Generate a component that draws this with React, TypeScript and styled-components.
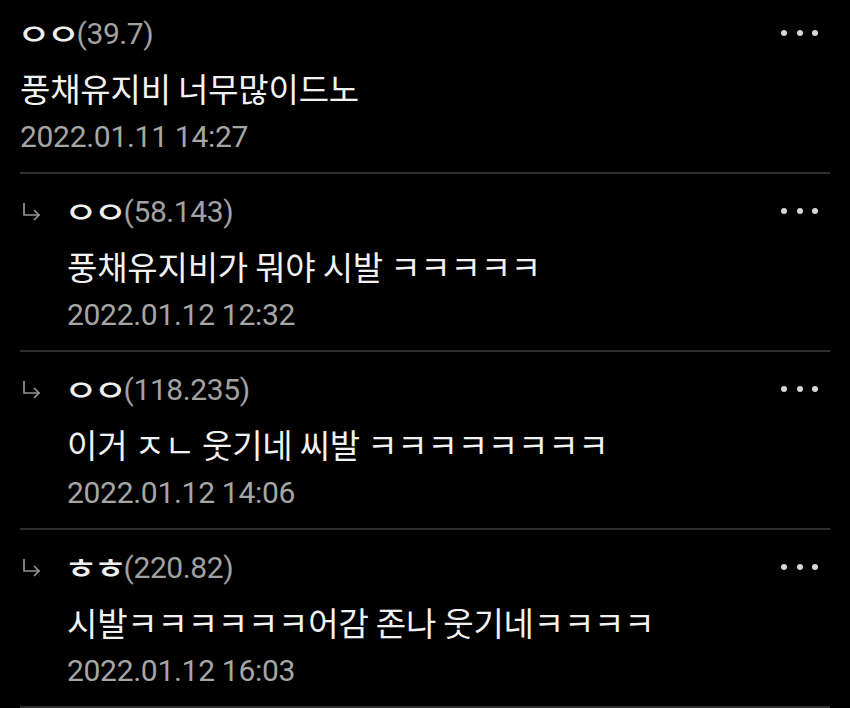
import styled, { createGlobalStyle } from 'styled-components';

const GlobalStyle = createGlobalStyle`
  html, body {
    margin: 0;
    padding: 0;
    background: #000;
  }
  body {
    width: 850px;
    height: 708px;
    overflow: hidden;
    font-family: Roboto, "Noto Sans CJK KR", sans-serif;
  }
`;

const StyledList = styled.div`
  margin: 0 20px;
`;

const Row = styled.div<{ $first?: boolean }>`
  display: flex;
  padding: ${(p) => (p.$first ? '13px' : '17px')} 0 11px;
  border-bottom: 2px solid #2f2f2f;
`;

const Arrow = styled.div`
  width: 47px;
  flex: none;
  height: 40px;
  display: flex;
  align-items: center;
  padding: 2px 0 0 1px;
  box-sizing: border-box;
  color: #959595;
`;

const Body = styled.div`
  flex: 1;
  min-width: 0;
`;

const Head = styled.div`
  display: flex;
  align-items: center;
  height: 40px;
`;

// the app's jamo are flatter ovals than Noto's circles
const Nick = styled.span`
  display: inline-block;
  color: #f0f0f0;
  font-family: "Noto Sans CJK KR", sans-serif;
  font-size: 34px;
  font-weight: 500;
  line-height: 40px;
  letter-spacing: -4px;
  margin: 0 5px 0 -3px;
  transform: scale(1.08, 0.84);
  transform-origin: left center;
`;

const Score = styled.span`
  color: #a2a2a2;
  font-size: 30px;
  letter-spacing: -0.4px;
`;

const More = styled.div`
  margin-left: auto;
  margin-right: 12px;
  display: flex;
  gap: 9.5px;

  i {
    width: 6px;
    height: 6px;
    border-radius: 50%;
    background: #d6d6d6;
  }
`;

const Text = styled.div`
  margin-top: 10px;
  height: 50px;
  line-height: 50px;
  color: #f2f2f2;
  font-family: "Noto Sans CJK KR", sans-serif;
  font-size: 33px;
  letter-spacing: -0.2px;
  white-space: nowrap;
`;

const Date = styled.div`
  height: 48px;
  line-height: 48px;
  color: #a6a6a6;
  font-size: 30px;
  letter-spacing: -0.3px;
`;

const ReplyIcon = () => (
  <svg width="20" height="20" viewBox="0 0 20 20" fill="none" stroke="currentColor" strokeWidth="1.7" strokeLinecap="round" strokeLinejoin="round">
    <path d="M3 1.5V13h15" />
    <path d="M13.5 8.5 18 13l-4.5 4.5" />
  </svg>
);

const comments = [
  { nick: 'ㅇㅇ', score: '39.7', text: '풍채유지비 너무많이드노', date: '2022.01.11 14:27', reply: false },
  { nick: 'ㅇㅇ', score: '58.143', text: '풍채유지비가 뭐야 시발 ㅋㅋㅋㅋㅋ', date: '2022.01.12 12:32', reply: true },
  { nick: 'ㅇㅇ', score: '118.235', text: '이거 ㅈㄴ 웃기네 씨발 ㅋㅋㅋㅋㅋㅋㅋㅋ', date: '2022.01.12 14:06', reply: true },
  { nick: 'ㅎㅎ', score: '220.82', text: '시발ㅋㅋㅋㅋㅋㅋ어감 존나 웃기네ㅋㅋㅋㅋ', date: '2022.01.12 16:03', reply: true },
];

const App = () => (
  <>
    <GlobalStyle />
    <StyledList>
      {comments.map((c, i) => (
        <Row key={i} $first={i === 0}>
          {c.reply && <Arrow><ReplyIcon /></Arrow>}
          <Body>
            <Head>
              <Nick>{c.nick}</Nick>
              <Score>({c.score})</Score>
              <More><i /><i /><i /></More>
            </Head>
            <Text>{c.text}</Text>
            <Date>{c.date}</Date>
          </Body>
        </Row>
      ))}
    </StyledList>
  </>
);

export default App;
